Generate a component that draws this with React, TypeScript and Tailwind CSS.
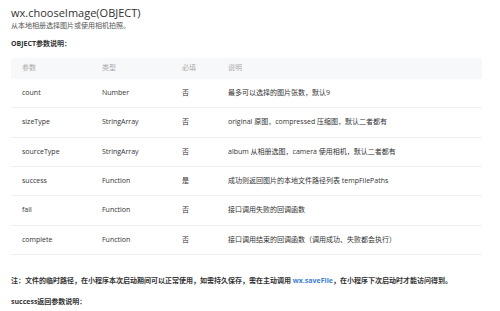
import React from "react";

const rows = [
  ["count", "Number", "否", "最多可以选择的图片张数，默认9"],
  ["sizeType", "StringArray", "否", "original 原图，compressed 压缩图，默认二者都有"],
  ["sourceType", "StringArray", "否", "album 从相册选图，camera 使用相机，默认二者都有"],
  ["success", "Function", "是", "成功则返回图片的本地文件路径列表 tempFilePaths"],
  ["fail", "Function", "否", "接口调用失败的回调函数"],
  ["complete", "Function", "否", "接口调用结束的回调函数（调用成功、失败都会执行）"],
];

export default function App() {
  return (
    <div
      className="w-[500px] h-[311px] bg-white overflow-hidden pl-[11px] text-[#333]"
      style={{ fontFamily: '"Open Sans", "Noto Sans CJK SC", sans-serif' }}
    >
      <div className="pt-[3px] text-[11px] leading-[19px] text-[#333]">wx.chooseImage(OBJECT)</div>
      <div className="text-[7px] leading-[8px] text-[#555]">从本地相册选择图片或使用相机拍照。</div>
      <div className="mt-[10px] text-[7px] leading-[8px] font-bold text-[#333]">OBJECT参数说明：</div>
      <div className="mt-[10px] w-[471px] text-[7px]">
        <div className="grid grid-cols-[80px_80px_46px_1fr] h-[21px] items-center bg-[#f7f8fa] text-[#aaa]">
          <div className="pl-[11px]">参数</div>
          <div className="pl-[11px]">类型</div>
          <div className="pl-[11px]">必填</div>
          <div className="pl-[11px]">说明</div>
        </div>
        {rows.map((r) => (
          <div
            key={r[0]}
            className="grid grid-cols-[80px_80px_46px_1fr] h-[29.33px] items-center border-b border-[#f0f0f0] text-[#333]"
          >
            <div className="pl-[11px]">{r[0]}</div>
            <div className="pl-[11px]">{r[1]}</div>
            <div className="pl-[11px]">{r[2]}</div>
            <div className="pl-[11px] whitespace-nowrap">{r[3]}</div>
          </div>
        ))}
      </div>
      <div className="mt-[22px] text-[7px] leading-[8px] font-bold text-[#333] whitespace-nowrap">
        注：文件的临时路径，在小程序本次启动期间可以正常使用，如需持久保存，需在主动调用{" "}
        <span className="text-[#3d7fd1]">wx.saveFile</span>，在小程序下次启动时才能访问得到。
      </div>
      <div className="mt-[13px] text-[7px] leading-[8px] font-bold text-[#333]">success返回参数说明：</div>
    </div>
  );
}
